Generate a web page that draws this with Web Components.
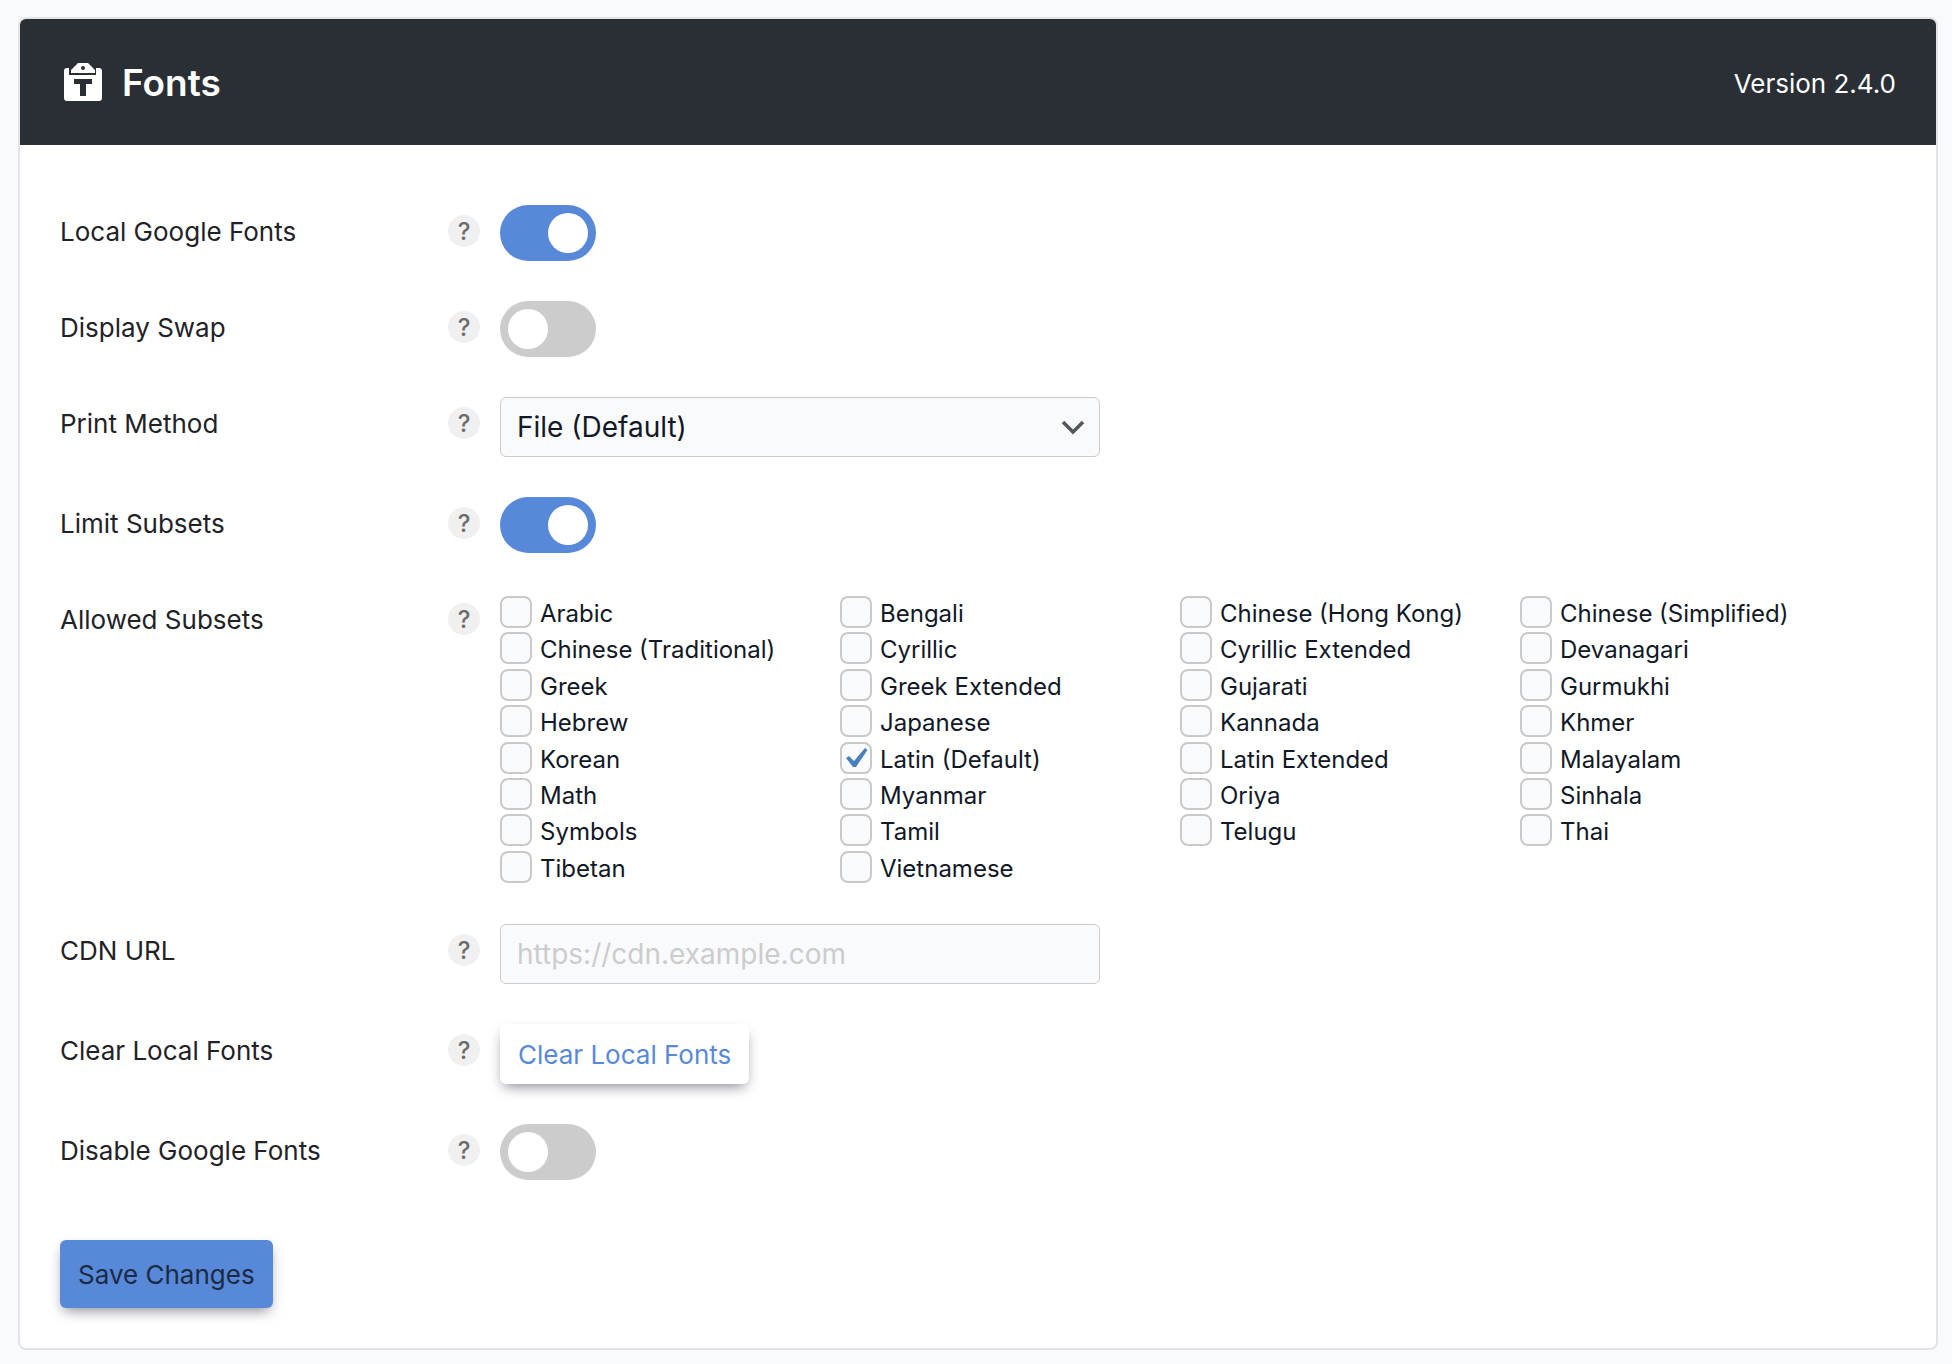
<!DOCTYPE html>
<html lang="en">
<head>
<meta charset="utf-8">
<title>Fonts</title>
<style>
body { margin: 0; background: #f9fafc; font-family: Inter, "Liberation Sans", sans-serif; font-size: 26px; color: #1f2227; }
</style>
</head>
<body>
<fonts-page></fonts-page>

<template id="tpl-page">
<style>
:host { display: block; padding: 17px 14px 14px 18px; }
settings-card { --accent: #5789d8; }
</style>
<settings-card>
  <svg slot="icon" width="38" height="38" viewBox="0 0 38 38" aria-hidden="true">
    <path fill="#fff" fill-rule="evenodd" d="M3 5H5V12H32V5H35Q38 5 38 8V35Q38 38 35 38H3Q0 38 0 35V8Q0 5 3 5ZM10 16V21H16V33H22V21H28V16Z"/>
    <path fill="#fff" fill-rule="evenodd" d="M14 0H24L31 7V10H7V7ZM19 3A2 2 0 0 0 19 7A2 2 0 0 0 19 3Z"/>
  </svg>
  <span slot="title">Fonts</span>
  <span slot="version">Version 2.4.0</span>
  <setting-row label="Local Google Fonts"><toggle-switch name="Local Google Fonts" checked></toggle-switch></setting-row>
  <setting-row label="Display Swap"><toggle-switch name="Display Swap"></toggle-switch></setting-row>
  <setting-row label="Print Method"><select-field name="Print Method" value="File (Default)"></select-field></setting-row>
  <setting-row label="Limit Subsets"><toggle-switch name="Limit Subsets" checked></toggle-switch></setting-row>
  <setting-row label="Allowed Subsets"><subset-list></subset-list></setting-row>
  <setting-row label="CDN URL"><text-field name="CDN URL" placeholder="https://cdn.example.com"></text-field></setting-row>
  <setting-row label="Clear Local Fonts"><action-button>Clear Local Fonts</action-button></setting-row>
  <setting-row label="Disable Google Fonts"><toggle-switch name="Disable Google Fonts"></toggle-switch></setting-row>
  <action-button slot="footer" primary>Save Changes</action-button>
</settings-card>
</template>

<template id="tpl-card">
<style>
:host { display: block; border: 2px solid #e2e4e7; border-radius: 8px; background: #fff; overflow: hidden; }
header { display: flex; align-items: center; gap: 20px; height: 126px; padding: 0 40px 0 44px; background: #2a2e35; color: #fff; }
h1 { margin: 0; padding-top: 2px; font-size: 37px; line-height: 44px; font-weight: 600; flex: 1; }
.version { padding-top: 2px; }
.icon { display: flex; }
.rows { display: flex; flex-direction: column; gap: 40px; padding: 60px 40px; }
footer { display: flex; padding: 0 40px 40px; }
</style>
<header><span class="icon"><slot name="icon"></slot></span><h1><slot name="title"></slot></h1><span class="version"><slot name="version"></slot></span></header>
<div class="rows"><slot></slot></div>
<footer><slot name="footer"></slot></footer>
</template>

<template id="tpl-row">
<style>
:host { display: flex; align-items: flex-start; }
.label { flex: 0 0 388px; padding-top: 10px; line-height: 34px; }
.help { flex: none; width: 32px; height: 32px; margin: 10px 20px 0 0; padding: 2px 0 0; border: 0; border-radius: 50%; background: #f0f0f0; color: #6b6b6b; font: 500 24px/30px Inter, sans-serif; }
.control { flex: 1; min-width: 0; }
</style>
<span class="label"></span>
<button class="help" type="button">?</button>
<div class="control"><slot></slot></div>
</template>

<template id="tpl-toggle">
<style>
:host { display: block; height: 56px; }
input { appearance: none; display: flex; align-items: center; box-sizing: border-box; width: 96px; height: 56px; margin: 0; padding: 0 8px; border-radius: 28px; background: #ccc; }
input::before { content: ""; width: 40px; height: 40px; border-radius: 50%; background: #fff; }
input:checked { justify-content: flex-end; background: var(--accent); }
</style>
<input type="checkbox" role="switch">
</template>

<template id="tpl-select">
<style>
:host { display: grid; align-items: center; max-width: 600px; }
select, svg { grid-area: 1 / 1; }
select { appearance: none; box-sizing: border-box; width: 100%; height: 60px; margin: 0; padding: 0 60px 0 16px; border: 1px solid #c9cbce; border-radius: 6px; background: #f9fafc; color: #111827; font: 28px Inter, sans-serif; }
svg { justify-self: end; margin-right: 15px; pointer-events: none; }
</style>
<select><option></option></select>
<svg width="24" height="16" viewBox="0 0 24 16" aria-hidden="true"><path d="M2 3L12 13L22 3" fill="none" stroke="#50575e" stroke-width="3.500"/></svg>
</template>

<template id="tpl-text">
<style>
:host { display: block; max-width: 600px; }
input { box-sizing: border-box; display: block; width: 100%; height: 60px; margin: 0; padding: 0 16px; border: 1px solid #c9cbce; border-radius: 6px; background: #f9fafc; color: #111827; font: 28px Inter, sans-serif; }
input::placeholder { color: #ccc; opacity: 1; }
</style>
<input type="url">
</template>

<template id="tpl-button">
<style>
:host { display: flex; }
button { height: 60px; margin: 0; padding: 0 18px; border: 0; border-radius: 6px; background: #fff; color: var(--accent); font: 26px Inter, sans-serif; box-shadow: 0 6px 14px -2px rgba(50,50,93,.25), 0 6px 12px -6px rgba(0,0,0,.4); }
:host([primary]) button { height: 68px; background: var(--accent); color: #1c2a44; }
</style>
<button type="button"><slot></slot></button>
</template>

<template id="tpl-subsets">
<style>
:host { display: grid; grid-template-columns: repeat(auto-fill, 340px); grid-auto-rows: 1fr; min-height: 291px; }
</style>
</template>

<template id="tpl-check">
<style>
:host { display: block; }
label { display: flex; align-items: flex-start; gap: 8px; height: 36px; font-size: 24px; line-height: 36px; color: #111827; }
.box { display: grid; width: 32px; height: 32px; margin-top: 3px; }
.text { padding-top: 3px; }
input, svg { grid-area: 1 / 1; }
input { appearance: none; box-sizing: border-box; width: 32px; height: 32px; margin: 0; border: 2px solid #c9c9c9; border-radius: 8px; background: #f9fafc; }
svg { display: none; pointer-events: none; z-index: 1; }
input:checked + svg { display: block; }
</style>
<label><span class="box"><input type="checkbox"><svg width="32" height="32" viewBox="0 0 32 32" aria-hidden="true"><path fill="#4a80bd" d="M6 16L9 14L14 19L25 6L27.500 8L16 25H13Z"/></svg></span><span class="text"></span></label>
</template>

<script>
class BaseElement extends HTMLElement {
  mount(id) {
    const root = this.attachShadow({ mode: "open" });
    root.append(document.getElementById(id).content.cloneNode(true));
    return root;
  }
}
class SettingsCard extends BaseElement { connectedCallback() { this.mount("tpl-card"); } }
class SettingRow extends BaseElement {
  connectedCallback() {
    const root = this.mount("tpl-row"), label = this.getAttribute("label");
    root.querySelector(".label").textContent = label;
    root.querySelector(".help").setAttribute("aria-label", "Help: " + label);
  }
}
class ToggleSwitch extends BaseElement {
  connectedCallback() {
    const input = this.mount("tpl-toggle").querySelector("input");
    input.checked = this.hasAttribute("checked");
    input.setAttribute("aria-label", this.getAttribute("name"));
  }
}
class SelectField extends BaseElement {
  connectedCallback() {
    const root = this.mount("tpl-select");
    root.querySelector("option").textContent = this.getAttribute("value");
    root.querySelector("select").setAttribute("aria-label", this.getAttribute("name"));
  }
}
class TextField extends BaseElement {
  connectedCallback() {
    const input = this.mount("tpl-text").querySelector("input");
    input.placeholder = this.getAttribute("placeholder");
    input.setAttribute("aria-label", this.getAttribute("name"));
  }
}
class ActionButton extends BaseElement { connectedCallback() { this.mount("tpl-button"); } }
class SubsetCheck extends BaseElement {
  connectedCallback() {
    const root = this.mount("tpl-check");
    root.querySelector(".text").textContent = this.getAttribute("label");
    root.querySelector("input").checked = this.hasAttribute("checked");
  }
}
class SubsetList extends BaseElement {
  connectedCallback() {
    const root = this.mount("tpl-subsets");
    const names = ["Arabic", "Bengali", "Chinese (Hong Kong)", "Chinese (Simplified)",
      "Chinese (Traditional)", "Cyrillic", "Cyrillic Extended", "Devanagari",
      "Greek", "Greek Extended", "Gujarati", "Gurmukhi",
      "Hebrew", "Japanese", "Kannada", "Khmer",
      "Korean", "Latin (Default)", "Latin Extended", "Malayalam",
      "Math", "Myanmar", "Oriya", "Sinhala",
      "Symbols", "Tamil", "Telugu", "Thai", "Tibetan", "Vietnamese"];
    for (const name of names) {
      const item = document.createElement("subset-check");
      item.setAttribute("label", name);
      if (name === "Latin (Default)") item.setAttribute("checked", "");
      root.append(item);
    }
  }
}
class FontsPage extends BaseElement { connectedCallback() { this.mount("tpl-page"); } }
customElements.define("settings-card", SettingsCard);
customElements.define("setting-row", SettingRow);
customElements.define("toggle-switch", ToggleSwitch);
customElements.define("select-field", SelectField);
customElements.define("text-field", TextField);
customElements.define("action-button", ActionButton);
customElements.define("subset-check", SubsetCheck);
customElements.define("subset-list", SubsetList);
customElements.define("fonts-page", FontsPage);
</script>
</body>
</html>
